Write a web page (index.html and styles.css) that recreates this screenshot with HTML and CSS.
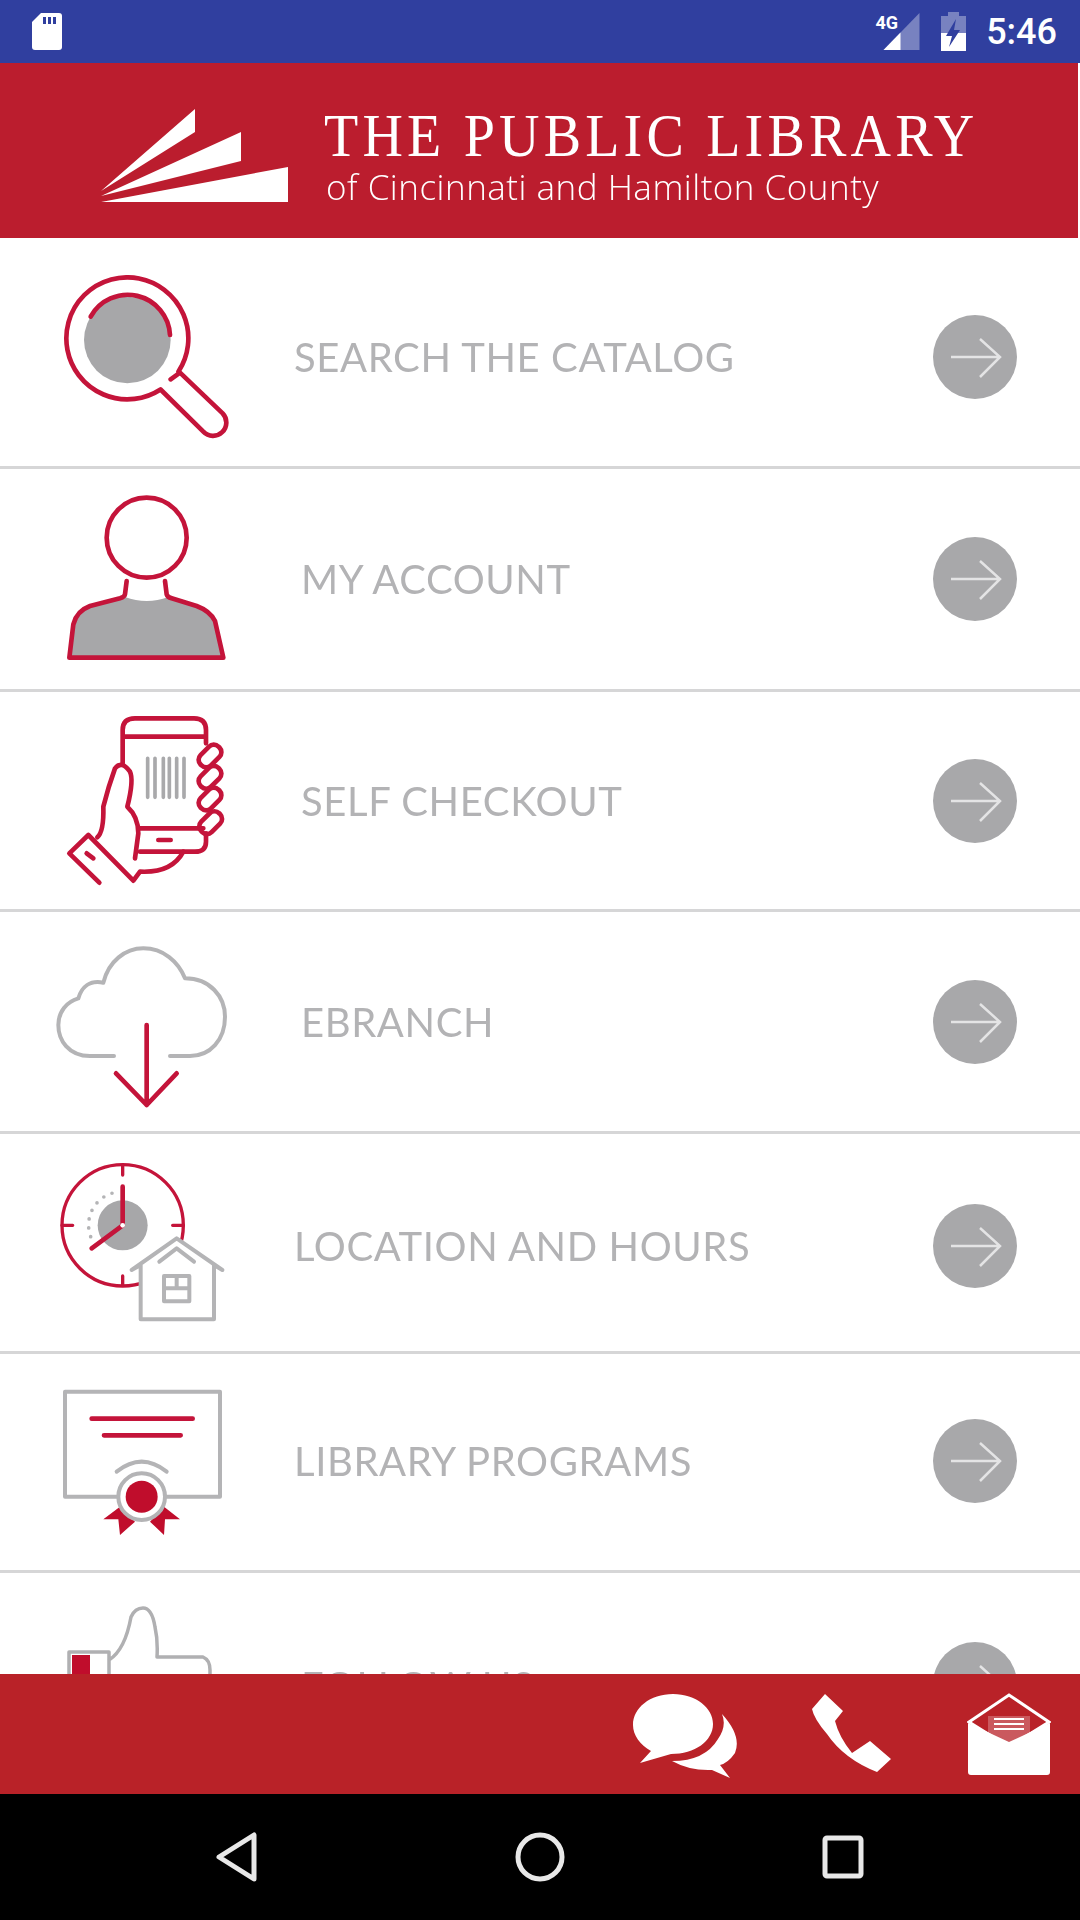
FILE: index.html
```html
<!doctype html>
<html>
	<head>
		<title>The Public Library of Cincinnati and Hamilton County</title>
		<link rel="stylesheet" href="styles.css">
	</head>
	<body>
		<div id="phone">
			<div id="statusbar">
				<svg class="sdcard" width="30" height="37" viewBox="0 0 30 37"><path d="M9 0h18q3 0 3 3v31q0 3-3 3H3q-3 0-3-3V9z" fill="#fff"/><path d="M11 4h3v7h-3zM16 4h3v7h-3zM21 4h3v7h-3z" fill="#303f9f"/></svg>
				<div class="status-right">
					<span class="net">4G</span>
					<svg class="signal" width="37" height="37" viewBox="0 0 36 37"><path d="M0 37L36 0v37z" fill="#fff" fill-opacity=".35"/><path d="M0 37L17 19.500V37z" fill="#fff"/></svg>
					<svg class="battery" width="25" height="39" viewBox="0 0 25 39"><path d="M7 0h11v4h7v35H0V4h7z" fill="#fff" fill-opacity=".35"/><path d="M0 21h25v18H0z" fill="#fff"/><path d="M15 7L5 24h6l-3 11 11-17h-6z" fill="#303f9f"/></svg>
					<span class="clock">5:46</span>
				</div>
			</div>

			<div id="header">
				<svg class="rays" width="188" height="94" viewBox="101 109 188 94"><path d="M195 109v23l-94 59zM241 132v29l-140 35zM288 167v35H101z" fill="#fff"/></svg>
				<div class="wordmark">
					<div class="wordmark-top">THE PUBLIC LIBRARY</div>
					<div class="wordmark-sub">of Cincinnati and Hamilton County</div>
				</div>
			</div>

			<div id="list">
				<div class="row row-search">
					<svg class="icon" viewBox="0 -9 660 660">
						<circle cx="262" cy="270" r="130" fill="#a7a7a9"/>
						<path class="red" d="M415.500 364.700A183 183 0 1 0 361.700 418.500L490 545A35 35 0 0 0 548 490L420 368L392 388"/>
						<path class="red" d="M152 200A127 127 0 0 1 390 255"/>
					</svg>
					<span class="label">SEARCH THE CATALOG</span>
					<svg class="go" viewBox="0 0 84 84"><circle cx="42" cy="42" r="42"/><path d="M18 42h49M47 24l20 18-20 20"/></svg>
				</div>

				<div class="row row-account">
					<svg class="icon" viewBox="0 654 660 660">
						<path d="M255 1038Q320 1062 385 1038L470 1065Q510 1080 525 1110L550 1220H88L100 1120Q110 1080 150 1065z" fill="#a7a7a9"/>
						<circle class="red" cx="320" cy="860" r="120"/>
						<path class="red" d="M260 990L255 1030Q254 1038 240 1042L150 1065Q110 1080 100 1120L88 1220H550L525 1110Q510 1080 470 1065L395 1042Q382 1038 380 1030L375 990"/>
					</svg>
					<span class="label label-in">MY ACCOUNT</span>
					<svg class="go" viewBox="0 0 84 84"><circle cx="42" cy="42" r="42"/><path d="M18 42h49M47 24l20 18-20 20"/></svg>
				</div>

				<div class="row row-checkout">
					<svg class="icon" viewBox="0 -27 660 660">
						<path class="thin-gray" d="M323 175V292M345 175V292M370 175V292M388 175V292M410 175V292M432 175V292"/>
						<path class="red" d="M248 190V90Q248 55 285 55H462Q498 55 498 90V130M250 110H495M300 385H490M498 400V425Q498 455 465 455H300M355 420H392"/>
						<g class="red">
							<rect x="472" y="146" width="76" height="44" rx="20" transform="rotate(-45 510 168)"/>
							<rect x="472" y="210" width="76" height="44" rx="20" transform="rotate(-45 510 232)"/>
							<rect x="472" y="275" width="76" height="44" rx="20" transform="rotate(-45 510 297)"/>
							<rect x="474" y="346" width="76" height="44" rx="20" transform="rotate(-45 512 368)"/>
						</g>
						<path class="red" d="M172 412Q192 395 190 320Q205 260 225 205Q245 180 270 215Q282 240 262 320Q295 350 295 400L285 475M178 548L88 460L145 405L280 542L300 515Q395 520 430 455M140 460L160 475"/>
					</svg>
					<span class="label label-in">SELF CHECKOUT</span>
					<svg class="go" viewBox="0 0 84 84"><circle cx="42" cy="42" r="42"/><path d="M18 42h49M47 24l20 18-20 20"/></svg>
				</div>

				<div class="row row-ebranch">
					<svg class="icon" viewBox="0 636 660 660">
						<path class="gray" d="M222 1068H150C85 1068 55 1020 55 975C55 935 80 905 115 895C125 860 150 840 190 848C205 785 255 745 310 745C370 745 415 785 435 835C510 835 555 890 555 950C555 1020 510 1068 450 1068H390"/>
						<path class="red" d="M320 975V1215M228 1120L320 1215L410 1120"/>
					</svg>
					<span class="label label-in">EBRANCH</span>
					<svg class="go" viewBox="0 0 84 84"><circle cx="42" cy="42" r="42"/><path d="M18 42h49M47 24l20 18-20 20"/></svg>
				</div>

				<div class="row row-hours">
					<svg class="icon" viewBox="0 -12 660 660">
						<circle cx="248" cy="256" r="75" fill="#a7a7a9"/>
						<path class="dots" d="M152 290A100 100 0 0 1 222 158"/>
						<circle class="red-thin" cx="248" cy="256" r="182"/>
						<path class="red-thin" d="M248 76V105M66 256H98M398 256H430M248 408V436"/>
						<path class="red" d="M248 140V250M248 256L155 325"/>
						<circle cx="248" cy="256" r="7" fill="#fff"/>
						<path class="gray house" d="M275 390L410 295L547 390L522 375V538H302V375z"/>
						<path class="gray" d="M358 365L410 325L462 365"/>
						<path class="gray" d="M372 408H448V484H372zM372 445H448M410 408V445"/>
					</svg>
					<span class="label">LOCATION AND HOURS</span>
					<svg class="go" viewBox="0 0 84 84"><circle cx="42" cy="42" r="42"/><path d="M18 42h49M47 24l20 18-20 20"/></svg>
				</div>

				<div class="row row-programs">
					<svg class="icon" viewBox="0 633 660 660">
						<path class="gray" d="M235 1070H75V755H540V1070H375"/>
						<path class="red" d="M155 836H458M192 886H422"/>
						<path class="gray" d="M230 995Q305 935 380 995"/>
						<path d="M240 1100L190 1138H235L240 1185L285 1145zM372 1100L420 1138H375L372 1185L330 1145z" fill="#c00d2c"/>
						<circle class="gray" cx="305" cy="1070" r="70" fill="#fff"/>
						<circle cx="305" cy="1070" r="48" fill="#c00d2c"/>
					</svg>
					<span class="label">LIBRARY PROGRAMS</span>
					<svg class="go" viewBox="0 0 84 84"><circle cx="42" cy="42" r="42"/><path d="M18 42h49M47 24l20 18-20 20"/></svg>
				</div>

				<div class="row row-follow">
					<svg class="icon" viewBox="40 1574 220 220">
						<rect x="72" y="1655" width="18" height="40" fill="#c00d2c"/>
						<path class="thumb" d="M69 1700V1652H109V1700M109 1660Q125 1650 131 1617Q135 1608 143 1608Q152 1608 155 1627Q158 1640 157 1657H203Q210 1660 210 1670V1700"/>
					</svg>
					<span class="label label-in">FOLLOW US</span>
					<svg class="go" viewBox="0 0 84 84"><circle cx="42" cy="42" r="42"/><path d="M18 42h49M47 24l20 18-20 20"/></svg>
				</div>
			</div>

			<div id="footer">
				<svg width="110" height="90" viewBox="627 1688 110 90">
					<path d="M673 1693C650 1693 633 1707 633 1724C633 1734 640 1744 651 1750L640 1762L671 1753C695 1753 713 1740 713 1723C713 1707 696 1693 673 1693z" fill="#fff"/>
					<path d="M722 1713Q742 1735 735 1752Q728 1762 720 1764L730 1777L712 1769Q690 1770 672 1760Q705 1760 718 1738Q727 1725 722 1713z" fill="#fff"/>
				</svg>
				<svg width="84" height="84" viewBox="811 1693 84 84">
					<path d="M826 1695L844 1712L836 1722Q840 1738 853 1754L871 1742L892 1760L878 1773Q845 1760 828 1735Q815 1720 813 1710z" fill="#fff"/>
				</svg>
				<svg width="84" height="84" viewBox="967 1694 84 84">
					<path d="M968 1725L1009 1744L1050 1725V1774Q1050 1777 1047 1777H971Q968 1777 968 1774z" fill="#fff"/>
					<path d="M969 1724L1009 1697L1049 1724L1009 1749z" fill="none" stroke="#fff" stroke-width="3"/>
					<path d="M988 1718H1030V1735L1009 1746L988 1735z" fill="#fff" fill-opacity=".25"/>
					<path d="M994 1721H1024M994 1726H1024M994 1731H1024" stroke="#fff" stroke-width="2" fill="none"/>
				</svg>
			</div>

			<div id="navbar">
				<svg width="46" height="54" viewBox="0 0 46 54"><path d="M40 5V49L5 27z"/></svg>
				<svg width="54" height="54" viewBox="0 0 54 54"><circle cx="27" cy="27" r="22"/></svg>
				<svg width="46" height="48" viewBox="0 0 46 48"><rect x="5" y="5" width="36" height="38" rx="2"/></svg>
			</div>
		</div>
	</body>
</html>
```

FILE: styles.css
```css
html, body {
	margin: 0;
	padding: 0;
	background: #fff;
}
#phone {
	display: flex;
	flex-direction: column;
	width: 1080px;
	height: 1920px;
	overflow: hidden;
}

/* status bar */
#statusbar {
	display: flex;
	align-items: center;
	justify-content: space-between;
	flex: none;
	height: 63px;
	padding: 0 23px 0 32px;
	box-sizing: border-box;
	background: #303f9f;
}
.status-right {
	display: flex;
	align-items: center;
}
.net {
	align-self: flex-start;
	margin: 1px -15px 0 0;
	font: bold 18px "Liberation Sans Narrow", "Roboto", sans-serif;
	color: #fff;
}
.signal {
	margin: 0 21px 0 0;
}
.clock {
	margin-left: 20px;
	font: 500 36px "Roboto", sans-serif;
	color: #fff;
}

/* logo header */
#header {
	display: flex;
	align-items: flex-start;
	flex: none;
	height: 175px;
	margin-right: 2px;
	padding: 46px 0 0 101px;
	box-sizing: border-box;
	background: #bb1d2e;
}
.wordmark {
	margin: 1px 0 0 35px;
	color: #fff;
	white-space: nowrap;
	filter: blur(.4px);
}
.wordmark-top {
	font: 56px/48px "Liberation Serif", serif;
	letter-spacing: 4.2px;
	transform: scaleY(1.08);
	transform-origin: left top;
}
.wordmark-sub {
	margin: 9px 0 0 2px;
	font: 300 35px/40px "Open Sans", sans-serif;
	letter-spacing: .5px;
}

/* menu */
#list {
	flex: 1;
	min-height: 0;
	overflow: hidden;
	filter: blur(.6px);
}
.row {
	display: flex;
	align-items: center;
	box-sizing: border-box;
	border-bottom: 3px solid #d6d6d7;
}
.row-search { height: 231px; padding-top: 10px; }
.row-account { height: 223px; padding-bottom: 1px; }
.row-checkout { height: 220px; padding-top: 1px; }
.row-ebranch { height: 222px; padding-top: 1px; }
.row-hours { height: 220px; padding-top: 7px; }
.row-programs { height: 219px; padding-bottom: 2px; }
.row-follow { height: 222px; border: 0; }

.icon {
	flex: none;
	width: 220px;
	height: 220px;
	margin-left: 40px;
}
.icon path, .icon circle, .icon rect {
	stroke-linecap: round;
	stroke-linejoin: round;
}
.red, .red-thin, .gray, .thin-gray, .dots, .thumb {
	fill: none;
}
.red {
	stroke: #c4143a;
	stroke-width: 14;
}
.red-thin {
	stroke: #c4143a;
	stroke-width: 10;
}
.gray {
	stroke: #b4b4b6;
	stroke-width: 12;
}
.gray[fill] {
	fill: #fff;
}
.house {
	fill: #fff;
}
.thin-gray {
	stroke: #a9a9ab;
	stroke-width: 11;
}
.dots {
	stroke: #b4b4b6;
	stroke-width: 11;
	stroke-dasharray: 0 27;
}
.thumb {
	stroke: #b0b0b2;
	stroke-width: 3.500;
}
.label {
	margin-left: 34px;
	font: 40px "Lato", sans-serif;
	letter-spacing: .6px;
	color: #b3b3b5;
	white-space: nowrap;
}
.label-in {
	margin-left: 41px;
}
.row-follow .label {
	margin-top: 4px;
}
.go {
	flex: none;
	width: 84px;
	height: 84px;
	margin: 0 63px 0 auto;
}
.go circle {
	fill: #a8a8aa;
}
.go path {
	fill: none;
	stroke: #e4e4e5;
	stroke-width: 2.5;
}

/* bottom bars */
#footer {
	position: relative;
	display: flex;
	align-items: center;
	justify-content: flex-end;
	gap: 73px;
	flex: none;
	height: 120px;
	padding: 0 29px 0 0;
	box-sizing: border-box;
	background: #b92228;
}
#footer svg {
	filter: blur(.6px);
}
#navbar {
	display: grid;
	grid-template-columns: repeat(3, 303px);
	justify-content: center;
	justify-items: center;
	align-items: center;
	flex: none;
	height: 126px;
	background: #000;
}
#navbar path, #navbar circle, #navbar rect {
	fill: none;
	stroke: #e8e8e8;
	stroke-width: 5;
	stroke-linejoin: round;
}
```
